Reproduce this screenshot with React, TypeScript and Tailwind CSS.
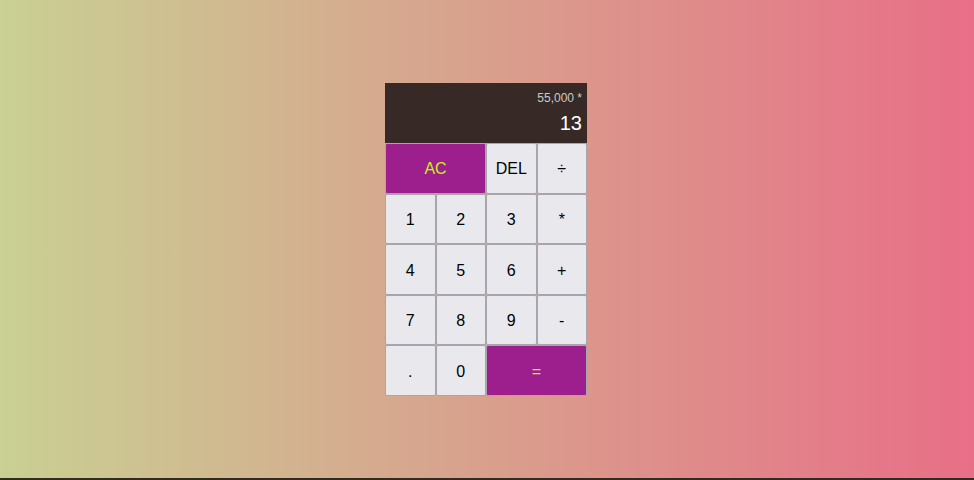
import React from "react";

const Btn = ({ label, span2 = false, accent = false }: { label: string; span2?: boolean; accent?: boolean }) => (
  <button
    className={
      "flex items-center justify-center pt-[2px] border border-[#a7a6ae] rounded-[2px] text-[16px] cursor-pointer " +
      (span2 ? "col-span-2 " : "") +
      (accent ? "bg-[#9c1f8d] text-[#c8f01a]" : "bg-[#e9e9ed] text-black")
    }
  >
    {label}
  </button>
);

export default function App() {
  return (
    <div
      className="w-full h-[480px] flex items-center justify-center bg-[linear-gradient(to_right,#c9d093,#e86f87)] shadow-[inset_0_-2px_0_#2f2c24]"
      style={{ fontFamily: '"Liberation Sans", Arial, sans-serif' }}
    >
      <div className="grid grid-cols-[repeat(4,50.5px)] grid-rows-[60px_repeat(5,50.6px)] mr-[2px] mb-[1px]">
        <div className="col-span-4 bg-[#372a26] flex flex-col items-end pt-[9px] pr-[5px] gap-[9px]">
          <div className="text-[12px] text-white/75 leading-none">55,000 *</div>
          <div className="text-[20px] text-white leading-none">13</div>
        </div>
        <Btn label="AC" span2 accent />
        <Btn label="DEL" />
        <Btn label="÷" />
        <Btn label="1" />
        <Btn label="2" />
        <Btn label="3" />
        <Btn label="*" />
        <Btn label="4" />
        <Btn label="5" />
        <Btn label="6" />
        <Btn label="+" />
        <Btn label="7" />
        <Btn label="8" />
        <Btn label="9" />
        <Btn label="-" />
        <Btn label="." />
        <Btn label="0" />
        <Btn label="=" span2 accent />
      </div>
    </div>
  );
}
